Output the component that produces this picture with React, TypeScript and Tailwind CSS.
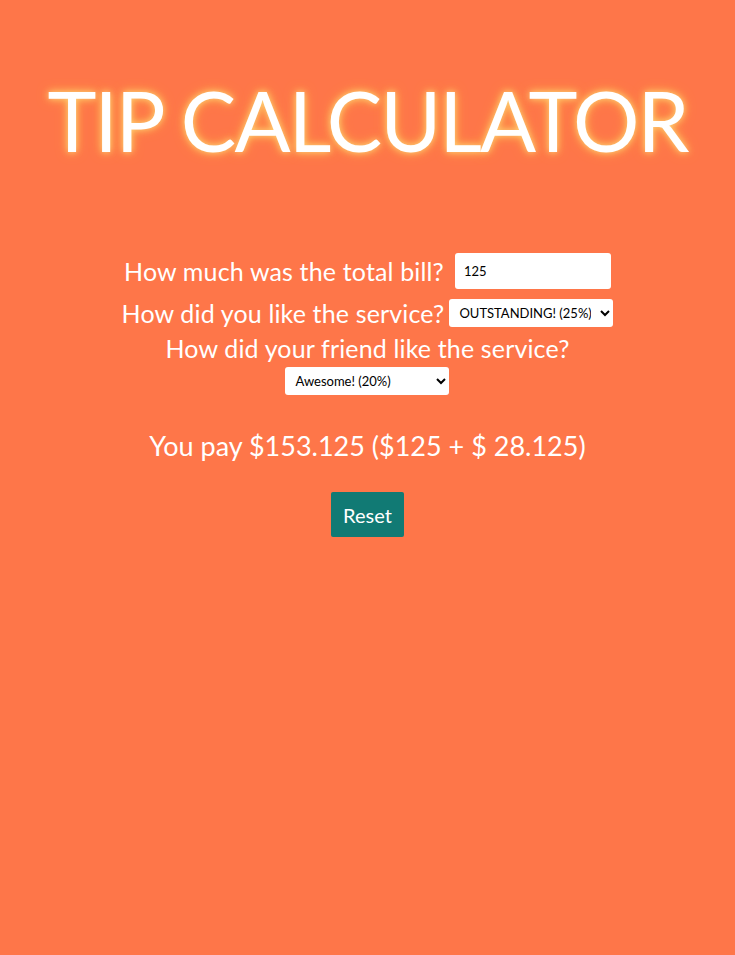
import React from "react";

export default function App() {
  return (
    <div
      className="min-h-[955px] w-full bg-[#fe7649] text-white flex flex-col items-center"
      style={{ fontFamily: "Lato, 'Noto Sans', sans-serif" }}
    >
      <h1 className="mt-[77px] text-[83px] leading-[86px] font-normal tracking-[-1.9px] whitespace-nowrap [text-shadow:0_0_6px_#ffd27a,0_0_12px_#ffb347]">
        TIP CALCULATOR
      </h1>

      <div className="mt-[90px] flex flex-col items-center">
        <div className="flex items-center gap-[11px]">
          <span className="text-[25px] leading-[36px] tracking-[0.15px]">How much was the total bill?</span>
          <input
            defaultValue="125"
            className="w-[156px] h-[36px] bg-white rounded-[3px] px-[9px] text-[13px] text-black outline-none"
            style={{ fontFamily: "Lato, sans-serif" }}
          />
        </div>
        <div className="mt-[10px] flex items-center gap-[5px]">
          <span className="text-[25px] leading-[28px] tracking-[0.15px]">How did you like the service?</span>
          <select
            defaultValue="25"
            className="w-[164px] h-[28px] bg-white rounded-[3px] px-[6px] text-[13px] text-black"
          >
            <option value="25">OUTSTANDING! (25%)</option>
          </select>
        </div>
        <div className="mt-[5px] text-[25px] leading-[32px] tracking-[0.15px]">How did your friend like the service?</div>
        <select
          defaultValue="20"
          className="mt-[3px] w-[164px] h-[28px] bg-white rounded-[3px] px-[6px] text-[13px] text-black"
        >
          <option value="20">Awesome! (20%)</option>
        </select>
      </div>

      <div className="mt-[31px] text-[27px] leading-[40px] whitespace-nowrap">
        You pay $153.125 ($125 + $ 28.125)
      </div>

      <button className="mt-[26px] w-[73px] h-[45px] bg-[#117a74] rounded-[2px] text-[20px] text-white">
        Reset
      </button>
    </div>
  );
}
